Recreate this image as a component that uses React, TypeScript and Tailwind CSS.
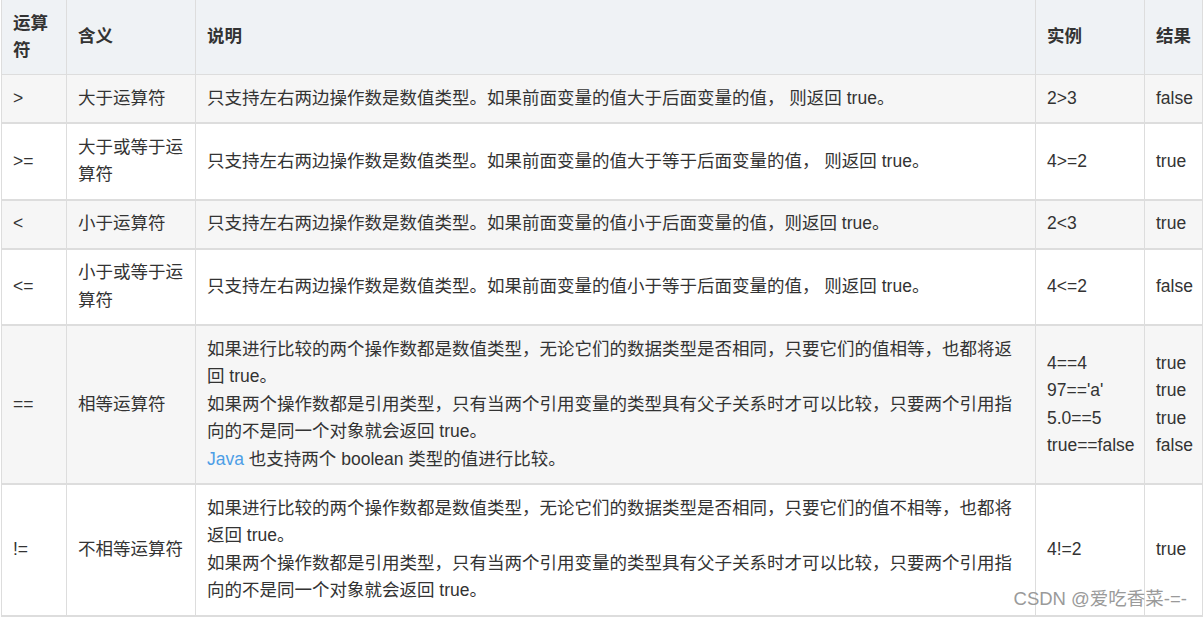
export default function App() {
  const rows = [
    {
      op: ">",
      name: "大于运算符",
      desc: <>只支持左右两边操作数是数值类型。如果前面变量的值大于后面变量的值， 则返回 true。</>,
      ex: ["2>3"],
      res: ["false"],
    },
    {
      op: ">=",
      name: "大于或等于运算符",
      desc: <>只支持左右两边操作数是数值类型。如果前面变量的值大于等于后面变量的值， 则返回 true。</>,
      ex: ["4>=2"],
      res: ["true"],
    },
    {
      op: "<",
      name: "小于运算符",
      desc: <>只支持左右两边操作数是数值类型。如果前面变量的值小于后面变量的值，则返回 true。</>,
      ex: ["2<3"],
      res: ["true"],
    },
    {
      op: "<=",
      name: "小于或等于运算符",
      desc: <>只支持左右两边操作数是数值类型。如果前面变量的值小于等于后面变量的值， 则返回 true。</>,
      ex: ["4<=2"],
      res: ["false"],
    },
    {
      op: "==",
      name: "相等运算符",
      desc: (
        <>
          如果进行比较的两个操作数都是数值类型，无论它们的数据类型是否相同，只要它们的值相等，也都将返回 true。
          <br />
          如果两个操作数都是引用类型，只有当两个引用变量的类型具有父子关系时才可以比较，只要两个引用指向的不是同一个对象就会返回 true。
          <br />
          <a className="text-[#4d9ee6]">Java</a> 也支持两个 boolean 类型的值进行比较。
        </>
      ),
      ex: ["4==4", "97=='a'", "5.0==5", "true==false"],
      res: ["true", "true", "true", "false"],
    },
    {
      op: "!=",
      name: "不相等运算符",
      desc: (
        <>
          如果进行比较的两个操作数都是数值类型，无论它们的数据类型是否相同，只要它们的值不相等，也都将返回 true。
          <br />
          如果两个操作数都是引用类型，只有当两个引用变量的类型具有父子关系时才可以比较，只要两个引用指向的不是同一个对象就会返回 true。
        </>
      ),
      ex: ["4!=2"],
      res: ["true"],
    },
  ];

  const cell =
    "border-x border-b-2 border-[#ddd] pl-[11px] pr-[8px] py-[9.75px] align-middle";

  return (
    <div className="relative w-[1203px] h-[617px] bg-white font-['Liberation_Sans','Noto_Sans_CJK_SC',sans-serif] text-[17.5px] leading-[27.5px] text-[#333]">
      <table className="ml-[1px] w-[1201px] table-fixed border-collapse">
        <colgroup>
          <col className="w-[65px]" />
          <col className="w-[129px]" />
          <col className="w-[840px]" />
          <col className="w-[109px]" />
          <col className="w-[58px]" />
        </colgroup>
        <thead>
          <tr className="bg-[#eff2f5]">
            {["运算符", "含义", "说明", "实例", "结果"].map((h) => (
              <th
                key={h}
                className="border-x border-b border-[#ddd] pl-[11px] pr-[8px] py-[9.5px] text-left align-middle font-bold"
              >
                {h}
              </th>
            ))}
          </tr>
        </thead>
        <tbody>
          {rows.map((r, i) => (
            <tr
              key={r.op}
              className={i % 2 === 0 ? "bg-[#f6f6f6]" : "bg-white"}
            >
              <td className={cell}>{r.op}</td>
              <td className={cell}>{r.name}</td>
              <td className={cell}>{r.desc}</td>
              <td className={cell}>
                {r.ex.map((e, j) => (
                  <div key={j}>{e}</div>
                ))}
              </td>
              <td className={cell}>
                {r.res.map((e, j) => (
                  <div key={j}>{e}</div>
                ))}
              </td>
            </tr>
          ))}
        </tbody>
      </table>

      {/* watermark */}
      <div className="absolute right-[16px] bottom-[7px] text-[18.5px] leading-[22px] text-[#9a9a9a]">
        CSDN @爱吃香菜-=-
      </div>
    </div>
  );
}
